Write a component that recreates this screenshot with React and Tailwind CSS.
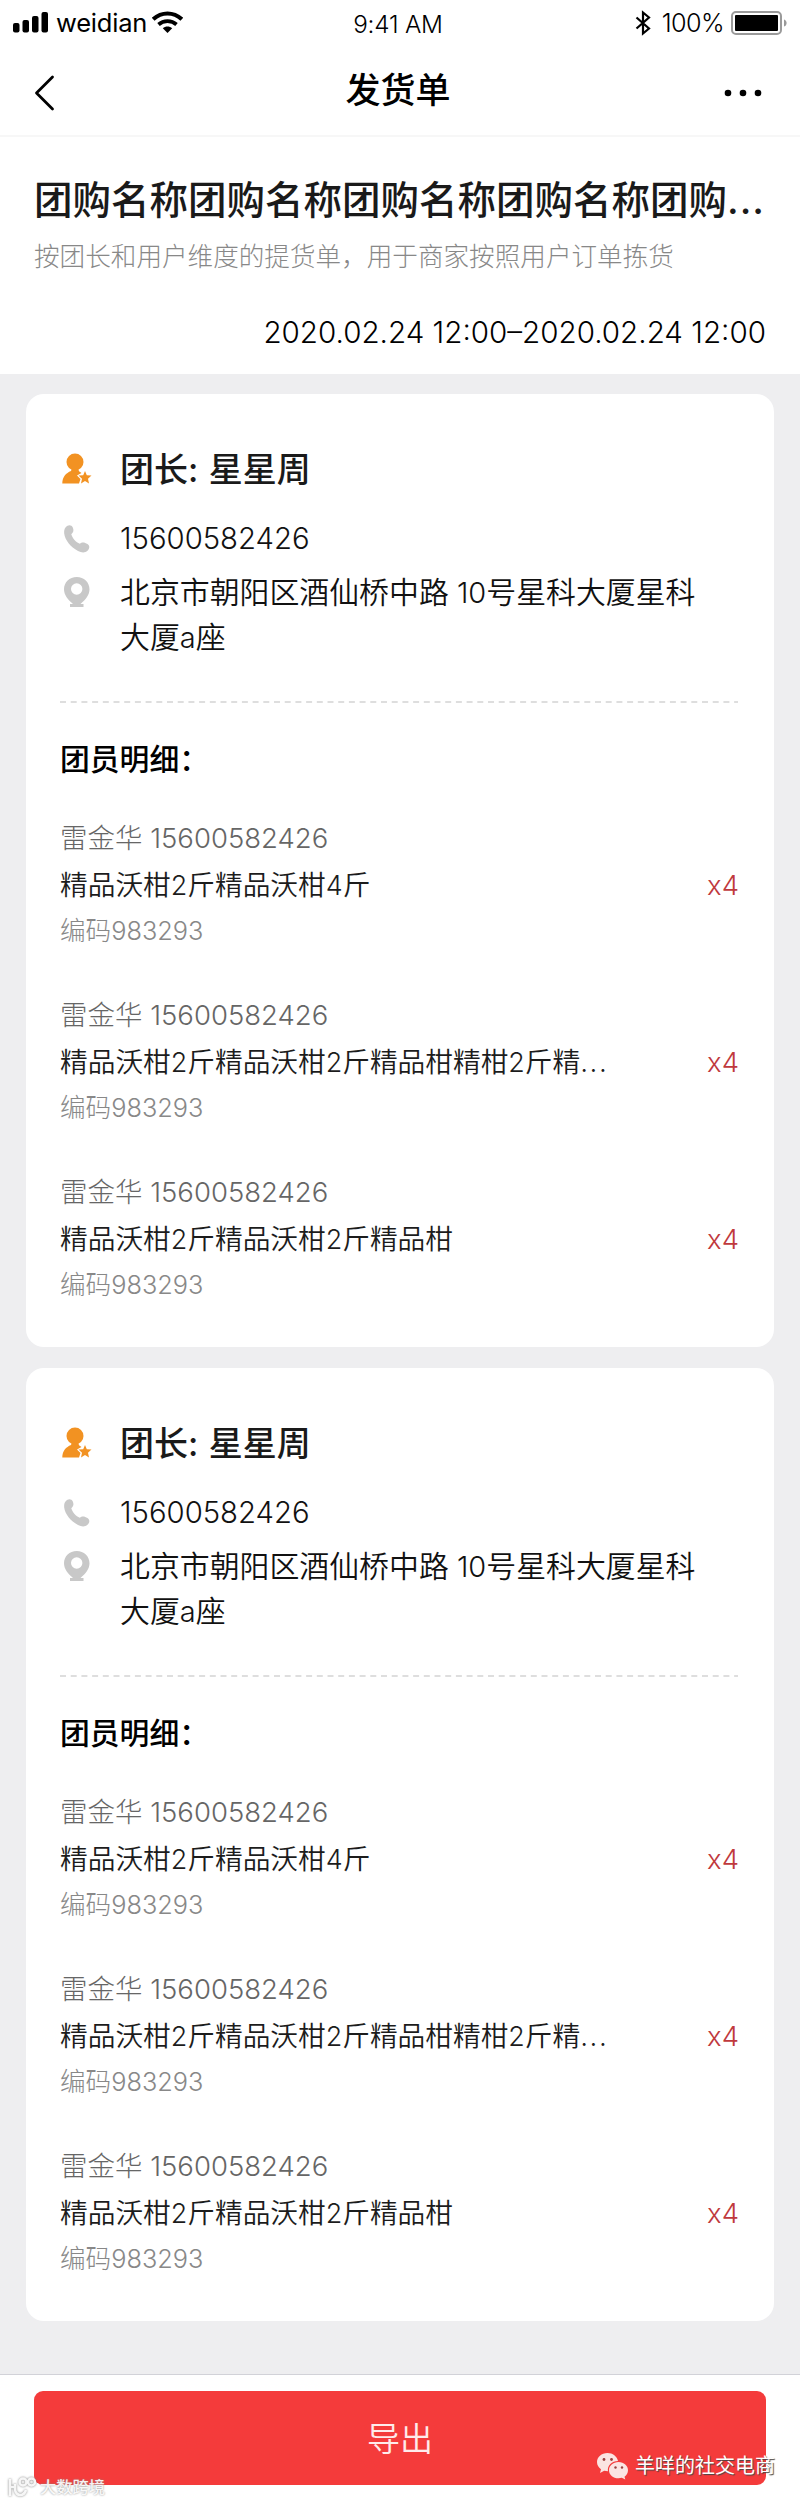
import React from 'react';

const members = [
    { name: '雷金华', phone: '15600582426', goods: '精品沃柑2斤精品沃柑4斤', code: '983293', count: 4 },
    { name: '雷金华', phone: '15600582426', goods: '精品沃柑2斤精品沃柑2斤精品柑精柑2斤精', more: true, code: '983293', count: 4 },
    { name: '雷金华', phone: '15600582426', goods: '精品沃柑2斤精品沃柑2斤精品柑', code: '983293', count: 4 },
];

const groups = [
    { leader: '星星周', phone: '15600582426', address: ['北京市朝阳区酒仙桥中路 10号星科大厦星科', '大厦a座'], members },
    { leader: '星星周', phone: '15600582426', address: ['北京市朝阳区酒仙桥中路 10号星科大厦星科', '大厦a座'], members },
];

// Latin runs sit slightly smaller than the Chinese glyphs around them
function Mixed({ text }) {
    return text.split(/([\x20-\x7e]+)/).map((part, i) => (
        i % 2 ? <span key={i} className="text-[0.97em] leading-none whitespace-pre">{part}</span> : part
    ));
}

function StatusBar() {
    return (
        <div className="h-[46px] shrink-0 flex items-center justify-between pl-3 pr-3 text-black">
            <div className="w-[280px] flex items-center">
                <svg width="38" height="24" viewBox="0 0 38 24">
                    <rect x="1" y="12" width="6.5" height="9.5" rx="2" />
                    <rect x="10.5" y="9" width="6.5" height="12.5" rx="2" />
                    <rect x="20" y="5" width="6.5" height="16.5" rx="2" />
                    <rect x="29.5" y="1" width="6.5" height="20.5" rx="2" />
                </svg>
                <span className="text-[25.5px] leading-[46px] ml-[6px] -tracking-[0.2px]">weidian</span>
                <svg className="ml-[5px]" width="31" height="24" viewBox="0 0 31 24" fill="none" stroke="currentColor">
                    <path d="M1.2 8.2C9.5 .6 21.5 .6 29.8 8.2" strokeWidth="4" />
                    <path d="M6.5 13.5C11.5 9 19.5 9 24.5 13.5" strokeWidth="3.7" />
                    <path d="M10.8 17.3C13.5 15 17.5 15 20.2 17.3L15.5 22Z" fill="currentColor" stroke="none" />
                </svg>
            </div>
            <div className="text-[24.3px] leading-[46px] font-[350] -tracking-[0.2px] pt-[2px] pr-1">9:41 AM</div>
            <div className="w-[280px] flex items-center justify-end">
                <svg width="16" height="26" viewBox="0 0 16 26" fill="none" stroke="currentColor" strokeWidth="2.2">
                    <path d="M1.5 7.5L14 18.5L8 23.5V2.5L14 7.5L1.5 18.5" />
                </svg>
                <span className="text-[25.2px] leading-[46px] font-[350] ml-[11px] -tracking-[0.6px]">100%</span>
                <svg className="ml-[7px]" width="57" height="26" viewBox="0 0 57 26">
                    <rect x="1" y="2" width="49" height="22" rx="4" fill="none" stroke="#9a9a9a" strokeWidth="2" />
                    <rect x="4" y="5" width="43" height="16" rx="1" />
                    <path d="M53 9.5C56.5 10.5 56.5 15.5 53 16.5Z" fill="#9a9a9a" />
                </svg>
            </div>
        </div>
    );
}

function NavBar() {
    return (
        <div className="h-[91px] shrink-0 flex items-center justify-between pt-[5px] pl-[34px] pr-[38px] border-b-2 border-[#f7f7f7] text-black">
            <svg width="22" height="38" viewBox="0 0 22 38" fill="none" stroke="currentColor" strokeWidth="2.8" strokeLinecap="round" strokeLinejoin="round">
                <path d="M18.5 3L2.5 19L18.5 35" />
            </svg>
            <h1 className="text-[35px] leading-[44px] font-medium pl-4 pb-[7px]">发货单</h1>
            <svg width="38" height="8" viewBox="0 0 38 8">
                <circle cx="4" cy="4" r="3.3" />
                <circle cx="19" cy="4" r="3.3" />
                <circle cx="34" cy="4" r="3.3" />
            </svg>
        </div>
    );
}

function LeaderIcon() {
    return (
        <svg width="30" height="32" viewBox="0 0 30 32" fill="#f29222">
            <circle cx="13" cy="9" r="8.5" />
            <path d="M.3 30.5C.3 24 4 20 9 18L10 15H16L17 18.3L19.5 20L15 22.5L18.5 26L17 30.5Z" />
            <path d="M23 18L24.8 22.2L29.5 22.6L26 25.7L27 30.5L23 28L19 30.5L20 25.7L16.5 22.6L21.2 22.2Z" />
        </svg>
    );
}

function PhoneIcon() {
    return (
        <svg width="28" height="30" viewBox="0 0 28 30" fill="#c8c8c8">
            <path d="M2.5 3.5C5 .5 8.5 .8 9.8 3.5C11 6.5 10.5 8.5 8.3 10.2C9.5 14.5 13 18 16.8 19.8C18.8 17.8 21.5 18 24.5 20C27 21.8 26.8 24.5 24.5 26.8C22 29 18.5 28.8 15 27C7.5 23 2 16 1.2 9.5C1 7 1.2 5 2.5 3.5Z" />
        </svg>
    );
}

function PinIcon() {
    return (
        <svg width="28" height="32" viewBox="0 0 28 32" fill="#c8c8c8">
            <path fillRule="evenodd" d="M13.7 1C21 1 26.5 6.3 26.5 13.2C26.5 19 22.5 23.5 17.5 28H20.5V31H7V28H10C5 23.5 1 19 1 13.2C1 6.3 6.5 1 13.7 1ZM13.7 7.3A5.7 5.7 0 1 0 13.7 18.7A5.7 5.7 0 1 0 13.7 7.3Z" />
        </svg>
    );
}

function Member({ item }) {
    return (
        <div className="flex items-center justify-between">
            <div>
                <div className="h-[48px] text-[27.5px] leading-[48px] font-light text-[#666]">{item.name}<span className="leading-none"> {item.phone}</span></div>
                <div className="h-[46px] text-[27.7px] leading-[46px] font-[350] text-[#1c1c1c]"><Mixed text={item.goods} />{item.more && <span className="tracking-[1.5px] leading-none">...</span>}</div>
                <div className="h-[46px] text-[25.6px] leading-[46px] font-light text-[#888]">编码<span className="text-[0.99em] leading-none">{item.code}</span></div>
            </div>
            <div className="text-[27.5px] text-[#c0393d] font-light pt-[3px]">x{item.count}</div>
        </div>
    );
}

function GroupCard({ group }) {
    return (
        <section className="h-[953px] shrink-0 bg-white rounded-[18px] pl-[34px] pr-[35px] pt-[50px]">
            <div className="flex items-center h-[50px]">
                <div className="w-[60px] pl-[2px]"><LeaderIcon /></div>
                <h3 className="text-[34px] font-medium text-[#1a1a1a]">团长<span className="whitespace-pre tracking-[0.7px]">: </span>{group.leader}</h3>
            </div>
            <div className="flex items-center h-[46px] mt-[22px]">
                <div className="w-[60px] pl-[3px]"><PhoneIcon /></div>
                <div className="text-[29.3px] font-[350] text-[#111]">{group.phone}</div>
            </div>
            <div className="flex items-start mt-[8px]">
                <div className="w-[60px] pl-[3px] pt-[6px]"><PinIcon /></div>
                <div className="text-[29.9px] leading-[44.5px] font-[350] text-[#111]">
                    {group.address.map((line) => <div key={line}><Mixed text={line} /></div>)}
                </div>
            </div>
            <svg className="block mt-[42px]" width="678" height="2" viewBox="0 0 678 2">
                <path d="M0 1H678" stroke="#d4d4d4" strokeWidth="1.5" strokeDasharray="6 4.7" />
            </svg>
            <h4 className="text-[29.8px] leading-[46px] font-medium text-black mt-[33px]">团员明细：</h4>
            <div className="flex flex-col gap-[37px] mt-[32px]">
                {group.members.map((item, i) => <Member key={i} item={item} />)}
            </div>
        </section>
    );
}

export default function App() {
    return (
        <div className="relative w-[800px] h-[2502px] flex flex-col bg-[#eeeef0] overflow-hidden font-['Inter','Noto_Sans_CJK_SC',sans-serif]">
            <header className="h-[374px] shrink-0 bg-white flex flex-col">
                <StatusBar />
                <NavBar />
                <div className="px-[34px] pt-[37px]">
                    <h2 className="text-[38.5px] leading-[52px] font-medium text-[#1a1a1a] whitespace-nowrap">团购名称团购名称团购名称团购名称团购<span className="tracking-[1px]">...</span></h2>
                    <p className="text-[25.6px] leading-[38px] font-light text-[#888] mt-[12px] whitespace-nowrap">按团长和用户维度的提货单，用于商家按照用户订单拣货</p>
                    <p className="text-[29.6px] leading-[40px] font-[350] text-black text-right whitespace-nowrap mt-[36px]">2020.02.24 12:00–2020.02.24 12:00</p>
                </div>
            </header>
            <main className="flex-1 flex flex-col gap-[21px] px-[26px] pt-[20px]">
                {groups.map((group, i) => <GroupCard key={i} group={group} />)}
            </main>
            <footer className="h-[128px] shrink-0 bg-white border-t border-[#d2d2d8] px-[34px] pt-4">
                <button className="w-full h-[94px] rounded-[9px] bg-[#f43b3b] text-[33px] font-[350] text-white/90 pt-[3px]">导出</button>
            </footer>

            {/* account badges over the footer */}
            <div className="absolute left-[596px] top-[2451px] flex items-center gap-[7px] text-white">
                <svg width="32" height="28" viewBox="0 0 32 28" fill="#fbe4e2">
                    <path d="M11.5 1C5.5 1 1 5 1 10C1 13 2.5 15.5 5 17.2L4 21L8.2 18.8C9.5 19.1 10.5 19.2 12 19.2C11 13.5 16 9 22 9C21 4.3 16.8 1 11.5 1Z" />
                    <path d="M22.5 10C17 10 13 13.7 13 18.2C13 22.7 17 26.3 22.5 26.3C23.7 26.3 24.8 26.1 25.8 25.8L29.3 27.5L28.5 24.7C30.5 23.2 32 20.9 32 18.2C32 13.7 28 10 22.5 10Z" />
                    <g fill="#9b3f3d">
                        <circle cx="8" cy="7.5" r="1.4" />
                        <circle cx="15.5" cy="7.5" r="1.4" />
                        <circle cx="19.5" cy="15.5" r="1.2" />
                        <circle cx="26" cy="15.5" r="1.2" />
                    </g>
                </svg>
                <span className="text-[20px] leading-[30px] whitespace-nowrap [text-shadow:1px_1px_1px_#444]">羊咩的社交电商</span>
            </div>
            <div className="absolute left-[8px] top-[2475px] flex items-center gap-[4px] text-white/90">
                <svg className="[filter:drop-shadow(0_0_1px_#777)]" width="28" height="22" viewBox="0 0 28 22" fill="none" stroke="currentColor" strokeWidth="2.5">
                    <path d="M2 3V20M2 11H6M7 8V13C7 17 10 19 12 19C15 19 17 17 18 14" />
                    <circle cx="15" cy="6" r="3.5" />
                    <circle cx="23.5" cy="6" r="3.5" />
                </svg>
                <span className="text-[16.3px] leading-[24px] font-medium whitespace-nowrap [text-shadow:0_0_2px_#888]">大数跨境</span>
            </div>
        </div>
    );
}
